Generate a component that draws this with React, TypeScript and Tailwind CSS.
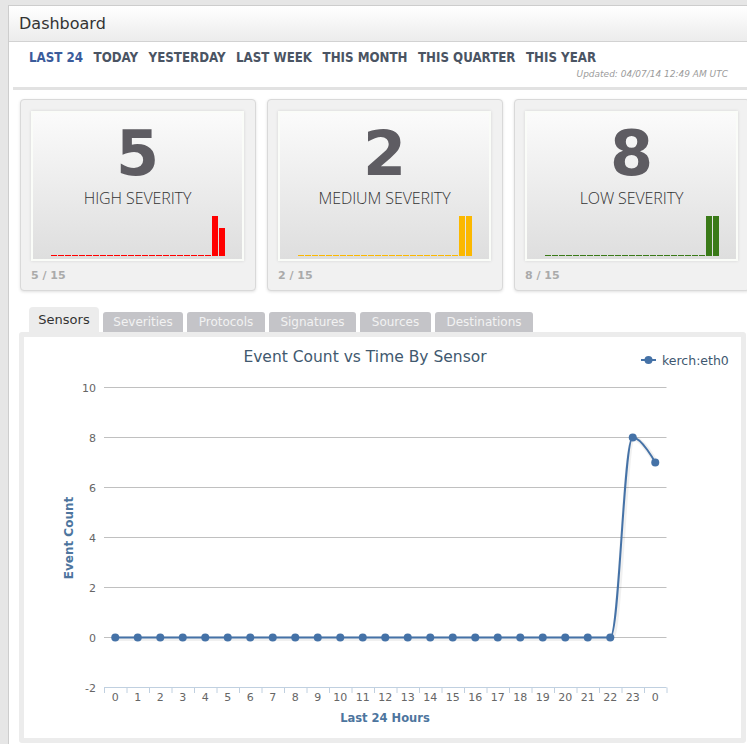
import React from "react";

const ranges = ["LAST 24", "TODAY", "YESTERDAY", "LAST WEEK", "THIS MONTH", "THIS QUARTER", "THIS YEAR"];

const cards = [
  { count: 5, label: "HIGH SEVERITY", total: "5 / 15", color: "#ff0000", last: [40, 28] },
  { count: 2, label: "MEDIUM SEVERITY", total: "2 / 15", color: "#fbb800", last: [40, 40] },
  { count: 8, label: "LOW SEVERITY", total: "8 / 15", color: "#3a7a18", last: [40, 40] },
];

const tabs = [
  { name: "Severities", w: "w-[80px]" },
  { name: "Protocols", w: "w-[78px]" },
  { name: "Signatures", w: "w-[87px]" },
  { name: "Sources", w: "w-[71px]" },
  { name: "Destinations", w: "w-[98px]" },
];

const values = [...Array(23).fill(0), 8, 7];
const hours = [...Array(24).keys(), 0];

const FONT = "'DejaVu Sans', Verdana, sans-serif";
const px = (i: number) => 115.25 + 22.5 * i;
const py = (v: number) => 636.5 - 25 * v;

const Sparkline = ({ color, last }: { color: string; last: number[] }) => {
  const bars = [...Array(23).fill(1), ...last];
  return (
    <div className="mt-auto mb-[3px] flex h-[40px] items-end gap-[1px] self-start pl-[18px]">
      {bars.map((h, i) => (
        <div key={i} className="w-[6px]" style={{ height: h, background: color }} />
      ))}
    </div>
  );
};

const Chart = () => {
  const linePath =
    `M ${px(0)} ${py(0)} L ${px(22)} ${py(0)} ` +
    `C 619.25 636.5 623.75 436.5 ${px(23)} ${py(8)} ` +
    `C 641.75 436.5 ${px(24)} ${py(7)} ${px(24)} ${py(7)}`;

  return (
    <svg width={717} height={401} viewBox="24 336 717 401" fontFamily={FONT}>
      <text x={365} y={361} textAnchor="middle" fontSize={15.5} fill="#41596f">
        Event Count vs Time By Sensor
      </text>

      {/* legend */}
      <line x1={641} y1={359} x2={656} y2={359} stroke="#4572a7" strokeWidth={2} />
      <circle cx={648.5} cy={359} r={4} fill="#4572a7" />
      <text x={662} y={363.5} fontSize={12.5} fill="#3e576f">
        kerch:eth0
      </text>

      {/* grid + y labels */}
      {[10, 8, 6, 4, 2, 0].map((v) => (
        <g key={v}>
          <line x1={104} x2={666.5} y1={py(v)} y2={py(v)} stroke="#c0c0c0" strokeWidth={1} />
          <text x={96} y={py(v) + 4} textAnchor="end" fontSize={11} fill="#666">
            {v}
          </text>
        </g>
      ))}
      <text x={96} y={py(-2) + 4} textAnchor="end" fontSize={11} fill="#666">
        -2
      </text>

      {/* x axis */}
      <line x1={104} x2={666.5} y1={686.5} y2={686.5} stroke="#c0d0e0" strokeWidth={1} />
      {[...Array(26).keys()].map((k) => (
        <line key={k} x1={104.5 + 22.5 * k} x2={104.5 + 22.5 * k} y1={686.5} y2={692} stroke="#c0d0e0" />
      ))}
      {hours.map((h, i) => (
        <text key={i} x={px(i)} y={700} textAnchor="middle" fontSize={11} fill="#666">
          {h}
        </text>
      ))}

      <text x={385} y={720.5} textAnchor="middle" fontSize={11.5} fontWeight="bold" fill="#4d759e">
        Last 24 Hours
      </text>
      <text
        x={72.5}
        y={537}
        textAnchor="middle"
        fontSize={12}
        fontWeight="bold"
        fill="#4d759e"
        transform="rotate(-90 72.5 537)"
      >
        Event Count
      </text>

      {/* series */}
      <path d={linePath} fill="none" stroke="rgba(0,0,0,0.06)" strokeWidth={5} transform="translate(1 1)" />
      <path d={linePath} fill="none" stroke="#4572a7" strokeWidth={2} />
      {values.map((v, i) => (
        <circle key={i} cx={px(i)} cy={py(v)} r={4} fill="#4572a7" />
      ))}
    </svg>
  );
};

export default function App() {
  return (
    <div className="min-h-screen overflow-hidden bg-[#e6e6e6] pl-2 pt-[5px] font-['DejaVu_Sans',sans-serif]">
      <div className="border-l border-t border-[#cdcdcd] bg-white pb-[6px]">
        <div className="flex h-[36px] items-center border-b border-[#d2d2d2] bg-linear-to-b from-white to-[#ececec] pl-[10px] text-[16px] text-[#333]">
          Dashboard
        </div>

        <div className="flex gap-[10.5px] pl-[20px] pt-[8px] font-['DejaVu_Sans_Condensed','DejaVu_Sans',sans-serif] text-[13.2px] font-bold leading-[16px] [font-stretch:condensed]">
          {ranges.map((r, i) => (
            <span key={r} className={i === 0 ? "text-[#3a5b9b]" : "text-[#4a5463]"}>
              {r}
            </span>
          ))}
        </div>
        <div className="mt-[2px] pr-[19px] text-right text-[9px] italic leading-[12px] text-[#9c9c9c]">
          Updated: 04/07/14 12:49 AM UTC
        </div>

        <div className="ml-[4px] mt-[7px] h-[3px] bg-[#e2e2e2]" />

        <div className="mt-[9px] flex gap-[11px] pl-[11px]">
          {cards.map((c) => (
            <div
              key={c.label}
              className="h-[192px] w-[236px] shrink-0 rounded-[4px] border border-[#d9d9d9] bg-[#f1f1f1] px-[10px] pt-[11px] shadow-[0_1px_3px_rgba(0,0,0,0.12)]"
            >
              <div className="flex h-[150px] w-[213px] flex-col items-center border-2 border-[#fafcf8] bg-linear-to-b from-[#fbfbfb] to-[#dedede] shadow-[0_0_3px_rgba(0,0,0,0.12)]">
                <div className="pt-[13px] text-[62px] font-bold leading-[56px] text-[#5e5c62]">{c.count}</div>
                <div className="mt-[6px] font-['Open_Sans',sans-serif] text-[16px] font-light leading-[20px] tracking-[-0.1px] text-[#333]">
                  {c.label}
                </div>
                <Sparkline color={c.color} last={c.last} />
              </div>
              <div className="mt-[8px] text-[11px] font-bold leading-[14px] text-[#aaa]">{c.total}</div>
            </div>
          ))}
        </div>

        <div className="ml-[10px] mr-[1px] mt-[16px]">
          <div className="flex items-end gap-[4px] pl-[10px]">
            <div className="flex h-[25px] w-[70px] items-center justify-center rounded-t-[4px] bg-[#ececec] text-[13px] text-[#333]">
              Sensors
            </div>
            {tabs.map((t) => (
              <div
                key={t.name}
                className={`flex h-[20px] ${t.w} items-center justify-center rounded-t-[3px] bg-[#c4c4c8] text-[12px] text-[#f2f2f2]`}
              >
                {t.name}
              </div>
            ))}
          </div>
          <div className="rounded-[3px] bg-[#ececec] p-[5px]">
            <div className="h-[401px] bg-white">
              <Chart />
            </div>
          </div>
        </div>
      </div>
    </div>
  );
}
